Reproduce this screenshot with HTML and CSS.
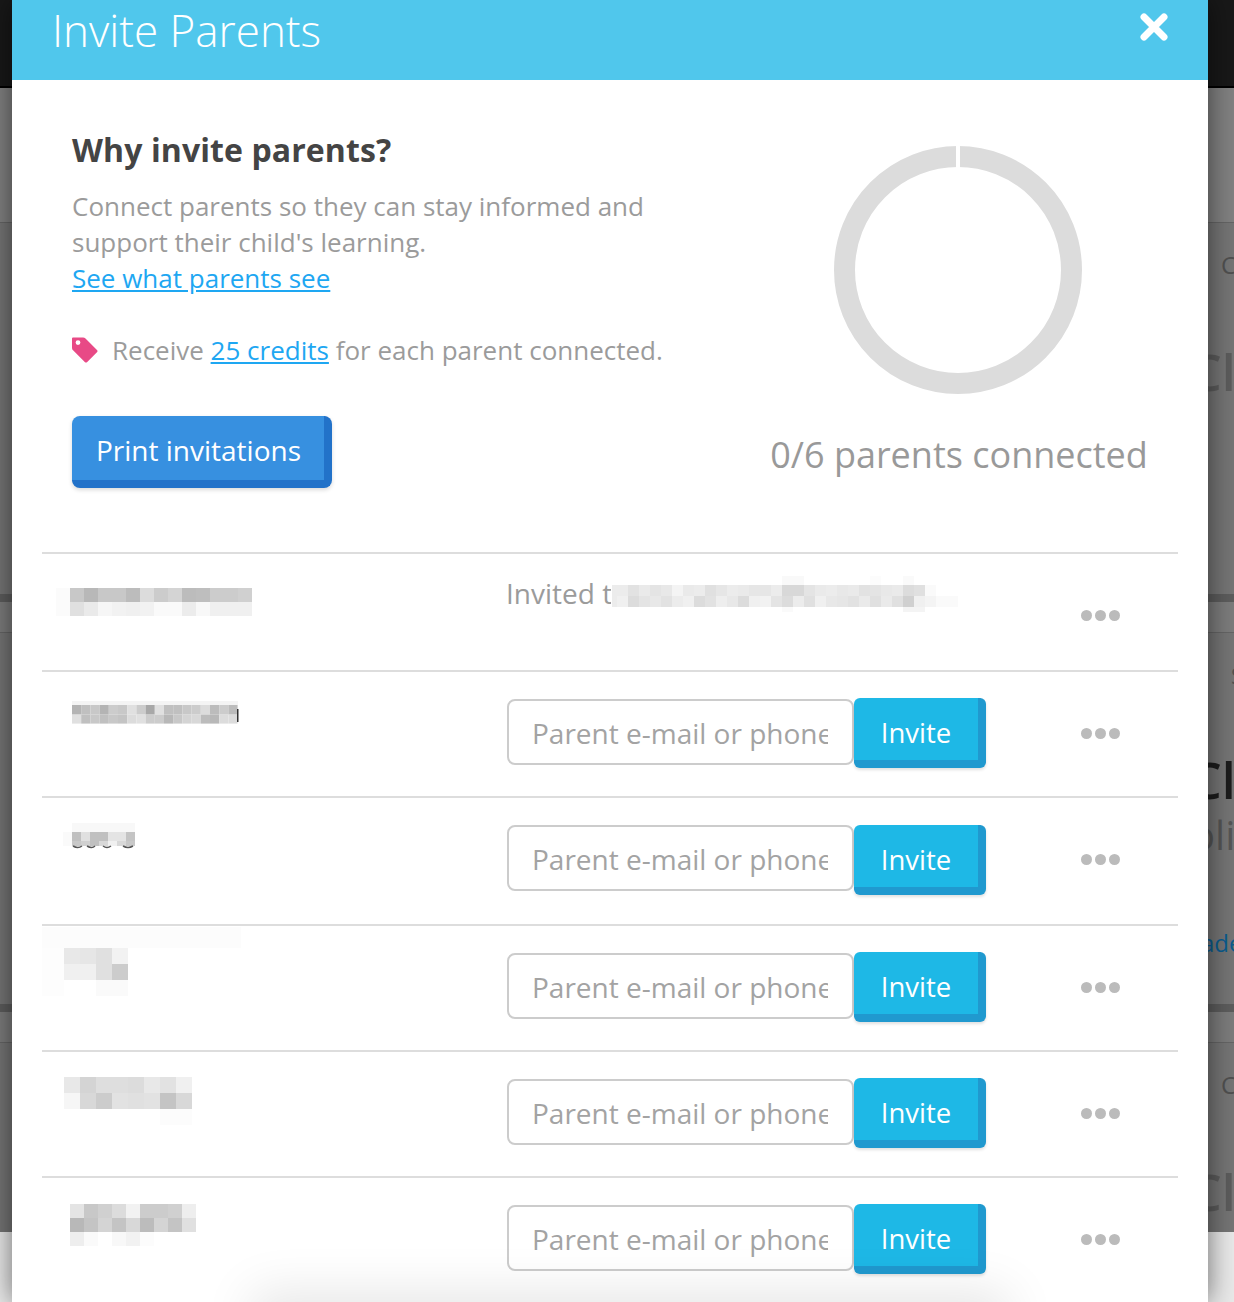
FILE: index.html
```html
<!DOCTYPE html>
<html lang="en">
<head>
<meta charset="utf-8">
<title>Invite Parents</title>
<link rel="stylesheet" href="styles.css">
</head>
<body>
<div class="page">
  <div class="bg-top"></div>
  <div class="bg-band-light"></div>
  <div class="bg-card bg-card-a">
    <div class="bg-small">C</div>
    <div class="bg-heading">Cl</div>
  </div>
  <div class="bg-sep"></div>
  <div class="bg-strip"></div>
  <div class="bg-card bg-card-b">
    <div class="bg-s">S</div>
    <div class="bg-heading bg-heading-dark">Cl</div>
    <div class="bg-oli">oli</div>
    <div class="bg-link">ade</div>
  </div>
  <div class="bg-sep"></div>
  <div class="bg-strip"></div>
  <div class="bg-card bg-card-c">
    <div class="bg-small">C</div>
    <div class="bg-heading">Cl</div>
  </div>
  <div class="bg-foot"></div>

  <section class="modal">
    <header class="modal-head">
      <h1 class="modal-title">Invite Parents</h1>
      <svg class="close" width="30" height="30" viewBox="0 0 30 30"><path d="M5 5 L25 25 M25 5 L5 25" fill="none" stroke="#fff" stroke-width="7" stroke-linecap="round"/></svg>
    </header>
    <div class="intro">
      <div class="intro-text">
        <h2 class="why">Why invite parents?</h2>
        <p class="copy">Connect parents so they can stay informed and support their child's learning.<br><a class="link" href="#">See what parents see</a></p>
        <p class="perk">
          <svg class="tag" width="28" height="28" viewBox="0 0 28 28"><path fill-rule="evenodd" fill="#e84a86" d="M2 1.5 H12 Q13.5 1.5 14.5 2.5 L26.2 14.2 Q27 15 26.2 16 L16 26.2 Q15 27 14 26.2 L2.3 14.5 Q1 13.5 1 12 V2.5 Q1 1.5 2 1.5 Z M7 4.2 A2.4 2.4 0 1 0 7 9 A2.4 2.4 0 1 0 7 4.2 Z"/></svg>
          <span>Receive <a class="link" href="#">25 credits</a> for each parent connected.</span>
        </p>
        <button class="btn-print" type="button">Print invitations</button>
      </div>
      <div class="progress">
        <svg class="ring" width="248" height="248" viewBox="0 0 248 248"><circle cx="124" cy="124" r="113.5" fill="none" stroke="#dcdcdc" stroke-width="21"/><rect class="ring-gap" x="122" y="0" width="4" height="24"/></svg>
        <div class="progress-label">0/6 parents connected</div>
      </div>
    </div>

    <div class="row row-first">
      <svg class="mosaic" width="465" height="116" viewBox="42 554 465 116">
        <rect x="56" y="588" width="14" height="28" fill="#fbfbfb"/>
        <g><rect x="70" y="588" width="14" height="14" fill="#c8c8c8"/><rect x="84" y="588" width="14" height="14" fill="#b8b8b8"/><rect x="98" y="588" width="14" height="14" fill="#c8c8c8"/><rect x="112" y="588" width="14" height="14" fill="#c8c8c8"/><rect x="126" y="588" width="14" height="14" fill="#bcbcbc"/><rect x="140" y="588" width="14" height="14" fill="#dcdcdc"/><rect x="154" y="588" width="14" height="14" fill="#cccccc"/><rect x="168" y="588" width="14" height="14" fill="#d4d4d4"/><rect x="182" y="588" width="14" height="14" fill="#bcbcbc"/><rect x="196" y="588" width="14" height="14" fill="#bebebe"/><rect x="210" y="588" width="14" height="14" fill="#cccccc"/><rect x="224" y="588" width="14" height="14" fill="#cccccc"/><rect x="238" y="588" width="14" height="14" fill="#d0d0d0"/></g>
        <g><rect x="70" y="602" width="14" height="14" fill="#e0e0e0"/><rect x="84" y="602" width="14" height="14" fill="#eaeaea"/><rect x="98" y="602" width="14" height="14" fill="#f6f6f6"/><rect x="112" y="602" width="14" height="14" fill="#f2f2f2"/><rect x="126" y="602" width="14" height="14" fill="#f0f0f0"/><rect x="140" y="602" width="14" height="14" fill="#f2f2f2"/><rect x="154" y="602" width="14" height="14" fill="#fafafa"/><rect x="168" y="602" width="14" height="14" fill="#fafafa"/><rect x="182" y="602" width="14" height="14" fill="#ececec"/><rect x="196" y="602" width="14" height="14" fill="#f8f8f8"/><rect x="210" y="602" width="14" height="14" fill="#f0f0f0"/><rect x="224" y="602" width="14" height="14" fill="#f0f0f0"/><rect x="238" y="602" width="14" height="14" fill="#f0f0f0"/></g>
      </svg>
      <div class="invited">
        <span class="invited-text">Invited t</span>
        <svg class="mosaic-inline" width="346" height="36" viewBox="607 576 346 36">
          <rect x="777" y="576" width="22" height="9" fill="#f9f9f9"/><rect x="865" y="576" width="11" height="9" fill="#fcfcfc"/><rect x="898" y="576" width="11" height="9" fill="#fafafa"/>
          <rect x="607" y="585" width="5" height="22" fill="#ececec"/>
          <rect x="612" y="585" width="11" height="11" fill="#ececec"/><rect x="623" y="585" width="11" height="11" fill="#e2e2e2"/><rect x="634" y="585" width="11" height="11" fill="#eaeaea"/><rect x="645" y="585" width="11" height="11" fill="#e4e4e4"/><rect x="656" y="585" width="11" height="11" fill="#e8e8e8"/><rect x="667" y="585" width="11" height="11" fill="#f4f4f4"/><rect x="678" y="585" width="11" height="11" fill="#eaeaea"/><rect x="689" y="585" width="11" height="11" fill="#ececec"/><rect x="700" y="585" width="11" height="11" fill="#e0e0e0"/><rect x="711" y="585" width="11" height="11" fill="#e6e6e6"/><rect x="722" y="585" width="11" height="11" fill="#ececec"/><rect x="733" y="585" width="11" height="11" fill="#eaeaea"/><rect x="744" y="585" width="11" height="11" fill="#e6e6e6"/><rect x="755" y="585" width="11" height="11" fill="#e6e6e6"/><rect x="766" y="585" width="11" height="11" fill="#ececec"/><rect x="777" y="585" width="11" height="11" fill="#d8d8d8"/><rect x="788" y="585" width="11" height="11" fill="#d8d8d8"/><rect x="799" y="585" width="11" height="11" fill="#e4e4e4"/><rect x="810" y="585" width="11" height="11" fill="#eaeaea"/><rect x="821" y="585" width="11" height="11" fill="#ececec"/><rect x="832" y="585" width="11" height="11" fill="#e8e8e8"/><rect x="843" y="585" width="11" height="11" fill="#eaeaea"/><rect x="854" y="585" width="11" height="11" fill="#e2e2e2"/><rect x="865" y="585" width="11" height="11" fill="#e4e4e4"/><rect x="876" y="585" width="11" height="11" fill="#e8e8e8"/><rect x="887" y="585" width="11" height="11" fill="#eaeaea"/><rect x="898" y="585" width="11" height="11" fill="#dcdcdc"/><rect x="909" y="585" width="11" height="11" fill="#e0e0e0"/><rect x="920" y="585" width="11" height="11" fill="#fafafa"/>
          <rect x="612" y="596" width="11" height="11" fill="#f0f0f0"/><rect x="623" y="596" width="11" height="11" fill="#dcdcdc"/><rect x="634" y="596" width="11" height="11" fill="#e4e4e4"/><rect x="645" y="596" width="11" height="11" fill="#e8e8e8"/><rect x="656" y="596" width="11" height="11" fill="#e2e2e2"/><rect x="667" y="596" width="11" height="11" fill="#ececec"/><rect x="678" y="596" width="11" height="11" fill="#f0f0f0"/><rect x="689" y="596" width="11" height="11" fill="#dcdcdc"/><rect x="700" y="596" width="11" height="11" fill="#e2e2e2"/><rect x="711" y="596" width="11" height="11" fill="#eeeeee"/><rect x="722" y="596" width="11" height="11" fill="#e8e8e8"/><rect x="733" y="596" width="11" height="11" fill="#dcdcdc"/><rect x="744" y="596" width="11" height="11" fill="#f0f0f0"/><rect x="755" y="596" width="11" height="11" fill="#f2f2f2"/><rect x="766" y="596" width="11" height="11" fill="#e4e4e4"/><rect x="777" y="596" width="11" height="11" fill="#dcdcdc"/><rect x="788" y="596" width="11" height="11" fill="#ececec"/><rect x="799" y="596" width="11" height="11" fill="#e0e0e0"/><rect x="810" y="596" width="11" height="11" fill="#f0f0f0"/><rect x="821" y="596" width="11" height="11" fill="#e8e8e8"/><rect x="832" y="596" width="11" height="11" fill="#e6e6e6"/><rect x="843" y="596" width="11" height="11" fill="#e2e2e2"/><rect x="854" y="596" width="11" height="11" fill="#eaeaea"/><rect x="865" y="596" width="11" height="11" fill="#e0e0e0"/><rect x="876" y="596" width="11" height="11" fill="#eaeaea"/><rect x="887" y="596" width="11" height="11" fill="#e0e0e0"/><rect x="898" y="596" width="11" height="11" fill="#d0d0d0"/><rect x="909" y="596" width="11" height="11" fill="#f0f0f0"/><rect x="920" y="596" width="11" height="11" fill="#f4f4f4"/><rect x="931" y="596" width="22" height="11" fill="#fafafa"/>
          <rect x="777" y="607" width="11" height="5" fill="#fafafa"/><rect x="898" y="607" width="22" height="5" fill="#f4f4f4"/>
        </svg>
      </div>
      <div class="dots"><i></i><i></i><i></i></div>
    </div>

    <div class="row">
      <svg class="mosaic" width="465" height="124" viewBox="42 672 465 124">
        <rect x="72" y="701" width="166" height="4" fill="#f4f4f4"/>
        <g><rect x="72" y="705" width="9.2" height="9.6" fill="#b4b4b4"/><rect x="81.2" y="705" width="9.2" height="9.6" fill="#c0c0c0"/><rect x="90.4" y="705" width="9.2" height="9.6" fill="#c8c8c8"/><rect x="99.6" y="705" width="9.2" height="9.6" fill="#b4b4b4"/><rect x="108.8" y="705" width="9.2" height="9.6" fill="#cccccc"/><rect x="118" y="705" width="9.2" height="9.6" fill="#c8c8c8"/><rect x="127.2" y="705" width="9.2" height="9.6" fill="#e0e0e0"/><rect x="136.4" y="705" width="9.2" height="9.6" fill="#cccccc"/><rect x="145.6" y="705" width="9.2" height="9.6" fill="#a8a8a8"/><rect x="154.8" y="705" width="9.2" height="9.6" fill="#e0e0e0"/><rect x="164" y="705" width="9.2" height="9.6" fill="#c0c0c0"/><rect x="173.2" y="705" width="9.2" height="9.6" fill="#c0c0c0"/><rect x="182.4" y="705" width="9.2" height="9.6" fill="#c8c8c8"/><rect x="191.6" y="705" width="9.2" height="9.6" fill="#cccccc"/><rect x="200.8" y="705" width="9.2" height="9.6" fill="#dcdcdc"/><rect x="210" y="705" width="9.2" height="9.6" fill="#bcbcbc"/><rect x="219.2" y="705" width="9.2" height="9.6" fill="#cccccc"/><rect x="228.4" y="705" width="9.2" height="9.6" fill="#bcbcbc"/></g>
        <g><rect x="72" y="714.6" width="9.2" height="9" fill="#e0e0e0"/><rect x="81.2" y="714.6" width="9.2" height="9" fill="#c0c0c0"/><rect x="90.4" y="714.6" width="9.2" height="9" fill="#c8c8c8"/><rect x="99.6" y="714.6" width="9.2" height="9" fill="#c0c0c0"/><rect x="108.8" y="714.6" width="9.2" height="9" fill="#c8c8c8"/><rect x="118" y="714.6" width="9.2" height="9" fill="#c4c4c4"/><rect x="127.2" y="714.6" width="9.2" height="9" fill="#dcdcdc"/><rect x="136.4" y="714.6" width="9.2" height="9" fill="#e0e0e0"/><rect x="145.6" y="714.6" width="9.2" height="9" fill="#cccccc"/><rect x="154.8" y="714.6" width="9.2" height="9" fill="#cccccc"/><rect x="164" y="714.6" width="9.2" height="9" fill="#b8b8b8"/><rect x="173.2" y="714.6" width="9.2" height="9" fill="#c8c8c8"/><rect x="182.4" y="714.6" width="9.2" height="9" fill="#d4d4d4"/><rect x="191.6" y="714.6" width="9.2" height="9" fill="#d8d8d8"/><rect x="200.8" y="714.6" width="9.2" height="9" fill="#bcbcbc"/><rect x="210" y="714.6" width="9.2" height="9" fill="#b8b8b8"/><rect x="219.2" y="714.6" width="9.2" height="9" fill="#dcdcdc"/><rect x="228.4" y="714.6" width="9.2" height="9" fill="#dcdcdc"/></g>
        <rect x="237" y="709" width="1.5" height="13" fill="#333"/>
      </svg>
      <div class="entry"><input class="field" type="text" placeholder="Parent e-mail or phone"></div>
      <button class="btn-invite" type="button">Invite</button>
      <div class="dots"><i></i><i></i><i></i></div>
    </div>

    <div class="row row-tall">
      <svg class="mosaic" width="465" height="126" viewBox="42 798 465 126">
        <rect x="72" y="823" width="63" height="9" fill="#f8f8f8"/>
        <rect x="63" y="832" width="9" height="14" fill="#fafafa"/>
        <g><rect x="72" y="832" width="9" height="9" fill="#c0c0c0"/><rect x="81" y="832" width="9" height="9" fill="#e0e0e0"/><rect x="90" y="832" width="9" height="9" fill="#c0c0c0"/><rect x="99" y="832" width="9" height="9" fill="#c0c0c0"/><rect x="108" y="832" width="9" height="9" fill="#e4e4e4"/><rect x="117" y="832" width="9" height="9" fill="#e4e4e4"/><rect x="126" y="832" width="9" height="9" fill="#c4c4c4"/></g>
        <g><rect x="72" y="841" width="9" height="5" fill="#c8c8c8"/><rect x="81" y="841" width="9" height="5" fill="#d0d0d0"/><rect x="90" y="841" width="9" height="5" fill="#c0c0c0"/><rect x="99" y="841" width="9" height="5" fill="#d8d8d8"/><rect x="108" y="841" width="9" height="5" fill="#f0f0f0"/><rect x="117" y="841" width="9" height="5" fill="#d8d8d8"/><rect x="126" y="841" width="9" height="5" fill="#c8c8c8"/></g>
        <path d="M73 846 Q78 849 82 846 M87 846 Q92 849 95 846 M103 846 Q107 849 111 846 M123 846 Q128 849 133 846" fill="none" stroke="#555" stroke-width="1.5"/>
      </svg>
      <div class="entry"><input class="field" type="text" placeholder="Parent e-mail or phone"></div>
      <button class="btn-invite btn-low" type="button">Invite</button>
      <div class="dots"><i></i><i></i><i></i></div>
    </div>

    <div class="row">
      <svg class="mosaic" width="465" height="124" viewBox="42 926 465 124">
        <rect x="42" y="927" width="199" height="21" fill="#fcfcfc"/>
        <rect x="42" y="948" width="22" height="48" fill="#fdfdfd"/>
        <g><rect x="64" y="948" width="16" height="16" fill="#e8e8e8"/><rect x="80" y="948" width="16" height="16" fill="#e6e6e6"/><rect x="96" y="948" width="16" height="16" fill="#e0e0e0"/><rect x="112" y="948" width="16" height="16" fill="#f2f2f2"/></g>
        <g><rect x="64" y="964" width="16" height="16" fill="#f0f0f0"/><rect x="80" y="964" width="16" height="16" fill="#f0f0f0"/><rect x="96" y="964" width="16" height="16" fill="#e0e0e0"/><rect x="112" y="964" width="16" height="16" fill="#cccccc"/></g>
        <rect x="96" y="980" width="32" height="16" fill="#fafafa"/>
      </svg>
      <div class="entry"><input class="field" type="text" placeholder="Parent e-mail or phone"></div>
      <button class="btn-invite" type="button">Invite</button>
      <div class="dots"><i></i><i></i><i></i></div>
    </div>

    <div class="row">
      <svg class="mosaic" width="465" height="124" viewBox="42 1052 465 124">
        <g><rect x="64" y="1077" width="16" height="16" fill="#e8e8e8"/><rect x="80" y="1077" width="16" height="16" fill="#d4d4d4"/><rect x="96" y="1077" width="16" height="16" fill="#dedede"/><rect x="112" y="1077" width="16" height="16" fill="#dedede"/><rect x="128" y="1077" width="16" height="16" fill="#dcdcdc"/><rect x="144" y="1077" width="16" height="16" fill="#e8e8e8"/><rect x="160" y="1077" width="16" height="16" fill="#e2e2e2"/><rect x="176" y="1077" width="16" height="16" fill="#f0f0f0"/></g>
        <g><rect x="64" y="1093" width="16" height="16" fill="#f6f6f6"/><rect x="80" y="1093" width="16" height="16" fill="#d8d8d8"/><rect x="96" y="1093" width="16" height="16" fill="#cccccc"/><rect x="112" y="1093" width="16" height="16" fill="#e2e2e2"/><rect x="128" y="1093" width="16" height="16" fill="#e0e0e0"/><rect x="144" y="1093" width="16" height="16" fill="#e2e2e2"/><rect x="160" y="1093" width="16" height="16" fill="#c4c4c4"/><rect x="176" y="1093" width="16" height="16" fill="#d8d8d8"/></g>
        <rect x="160" y="1109" width="32" height="16" fill="#fcfcfc"/>
      </svg>
      <div class="entry"><input class="field" type="text" placeholder="Parent e-mail or phone"></div>
      <button class="btn-invite" type="button">Invite</button>
      <div class="dots"><i></i><i></i><i></i></div>
    </div>

    <div class="row">
      <svg class="mosaic" width="465" height="124" viewBox="42 1178 465 124">
        <g><rect x="70" y="1204" width="14" height="14" fill="#e4e4e4"/><rect x="84" y="1204" width="14" height="14" fill="#c8c8c8"/><rect x="98" y="1204" width="14" height="14" fill="#d0d0d0"/><rect x="112" y="1204" width="14" height="14" fill="#dcdcdc"/><rect x="126" y="1204" width="14" height="14" fill="#f2f2f2"/><rect x="140" y="1204" width="14" height="14" fill="#cccccc"/><rect x="154" y="1204" width="14" height="14" fill="#cccccc"/><rect x="168" y="1204" width="14" height="14" fill="#d0d0d0"/><rect x="182" y="1204" width="14" height="14" fill="#eeeeee"/></g>
        <g><rect x="70" y="1218" width="14" height="14" fill="#b8b8b8"/><rect x="84" y="1218" width="14" height="14" fill="#c4c4c4"/><rect x="98" y="1218" width="14" height="14" fill="#d4d4d4"/><rect x="112" y="1218" width="14" height="14" fill="#c4c4c4"/><rect x="126" y="1218" width="14" height="14" fill="#d8d8d8"/><rect x="140" y="1218" width="14" height="14" fill="#bcbcbc"/><rect x="154" y="1218" width="14" height="14" fill="#d4d4d4"/><rect x="168" y="1218" width="14" height="14" fill="#c4c4c4"/><rect x="182" y="1218" width="14" height="14" fill="#e0e0e0"/></g>
        <g><rect x="70" y="1232" width="14" height="14" fill="#eeeeee"/><rect x="84" y="1232" width="14" height="14" fill="#fafafa"/><rect x="112" y="1232" width="14" height="14" fill="#f8f8f8"/><rect x="126" y="1232" width="14" height="14" fill="#f2f2f2"/><rect x="140" y="1232" width="14" height="14" fill="#fcfcfc"/></g>
      </svg>
      <div class="entry"><input class="field" type="text" placeholder="Parent e-mail or phone"></div>
      <button class="btn-invite" type="button">Invite</button>
      <div class="dots"><i></i><i></i><i></i></div>
    </div>
    <div class="fade"></div>
  </section>
</div>
</body>
</html>
```
FILE: styles.css
```css
* { box-sizing: border-box; }
html, body { margin: 0; padding: 0; height: 1302px; overflow: hidden; }
body { font-family: "Open Sans", "Liberation Sans", sans-serif; background: #e9e9e9; }
.page { position: relative; width: 1234px; height: 1302px; overflow: hidden; }

/* dimmed page behind the dialog */
.bg-top { height: 88px; background: #181818; border-bottom: 2px solid #000; }
.bg-band-light { height: 134px; background: #818181; }
.bg-card { background: #757575; overflow: hidden; white-space: nowrap; border-top: 1px solid #656565; }
.bg-card-a { height: 372px; }
.bg-card-b { height: 372px; }
.bg-card-c { height: 190px; }
.bg-sep { height: 8px; background: #5d5d5d; }
.bg-strip { height: 30px; background: #7c7c7c; }
.bg-foot { height: 70px; background: #e9e9e9; }
.bg-small { margin: 25px 0 0 1221px; font-size: 24px; line-height: 34px; color: #505050; }
.bg-heading { margin: 56px 0 0 1190px; font-size: 50px; line-height: 68px; font-weight: 600; color: #5c5c5c; }
.bg-heading-dark { color: #1c1c1c; }
.bg-s { margin: 27px 0 0 1231px; font-size: 22px; line-height: 30px; color: #505050; }
.bg-oli { margin: 0 0 0 1191px; font-size: 40px; line-height: 42px; color: #555; }
.bg-link { margin: 70px 0 0 1201px; font-size: 24px; line-height: 34px; color: #0a5c8e; }

/* dialog */
.modal { position: absolute; left: 12px; top: 0; width: 1196px; height: 1302px; overflow: hidden; background: #fff; box-shadow: 0 0 26px rgba(0,0,0,.55); }
.modal-head { display: flex; align-items: flex-start; justify-content: space-between; height: 80px; background: #50c7ec; padding: 0 39px 0 40px; }
.modal-title { margin: 0; font-size: 44px; font-weight: 300; line-height: 60px; color: #fff; }
.close { margin-top: 12px; }
.intro { display: flex; height: 472px; padding-left: 60px; }
.intro-text { width: 670px; padding-top: 48px; flex: none; }
.why { margin: 0; font-size: 32px; line-height: 44px; font-weight: 700; color: #444; letter-spacing: .1px; }
.copy { margin: 16px 0 0; font-size: 26px; line-height: 36px; color: #9b9b9b; width: 600px; }
.link { color: #1ea7f2; text-decoration: underline; }
.perk { display: flex; align-items: center; margin: 36px 0 0; font-size: 26px; line-height: 36px; color: #9b9b9b; }
.tag { flex: none; margin: 0 13px 0 -1px; }
.btn-print { display: block; width: 260px; height: 72px; margin-top: 48px; padding: 4px 0 0 1px; background: #3790e0; border: 0; border-right: 8px solid #2272c9; border-bottom: 8px solid #2272c9; border-radius: 8px; box-shadow: 0 2px 4px rgba(0,0,0,.15); color: #fff; font: 400 28px "Open Sans", sans-serif; }
.progress { display: flex; flex-direction: column; align-items: center; width: 400px; margin-left: 16px; padding-top: 66px; }
.ring { display: block; }
.ring-gap { fill: #fff; }
.progress-label { margin-top: 36px; padding-left: 2px; font-size: 36px; line-height: 50px; color: #999; white-space: nowrap; }

/* rows */
.row { display: grid; grid-template-columns: 465px 347px 132px 1fr; width: 1136px; margin-left: 30px; border-top: 2px solid #ddd; height: 126px; }
.row-first { height: 118px; }
.row-tall { height: 128px; }
.mosaic { display: block; }
.invited { grid-column: 2 / 4; display: flex; align-items: flex-start; padding-top: 22px; }
.invited-text { flex: none; width: 105px; margin: -1px 1px 0 -1px; font-size: 28px; line-height: 36px; color: #9b9b9b; white-space: nowrap; overflow: hidden; }
.mosaic-inline { flex: none; overflow: visible; }
.entry { padding-top: 27px; }
.field { display: block; width: 347px; height: 66px; padding: 2px 24px 0 23px; border: 2px solid #ccc; border-radius: 8px; background: #fff; font: 400 28px "Open Sans", sans-serif; color: #999; outline: 0; }
.field::placeholder { color: #a3a3a3; opacity: 1; }
.btn-invite { width: 132px; height: 70px; margin-top: 26px; padding: 6px 0 0; background: #1eb8e6; border: 0; border-right: 8px solid #2099cf; border-bottom: 8px solid #2099cf; border-radius: 6px; box-shadow: 0 2px 3px rgba(0,0,0,.12); color: #fff; font: 400 27.5px "Open Sans", sans-serif; }
.btn-low { margin-top: 27px; }
.dots { display: flex; gap: 3px; margin: 56px 0 0 95px; }
.dots i { display: block; width: 11px; height: 11px; border-radius: 50%; background: #bbb; }
.fade { position: absolute; left: 250px; right: 210px; bottom: -40px; height: 40px; box-shadow: 0 0 50px 10px rgba(0,0,0,.1); }
```
